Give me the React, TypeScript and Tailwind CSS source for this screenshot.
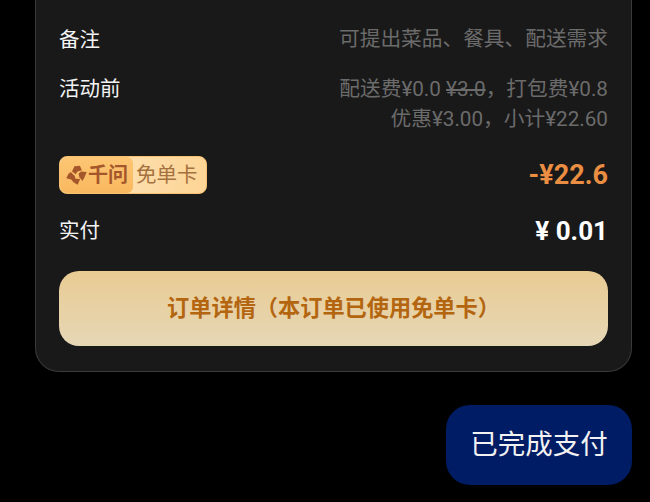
const font = { fontFamily: '"Roboto", "Noto Sans CJK SC", sans-serif' };

const QianwenIcon = () => (
  <svg width="23" height="23" viewBox="0 0 21 21" fill="#a5562a">
    <path d="M8.6 2 L13.6 1.6 L15.4 5.8 L11.4 6.8 L9.8 9.4 L6.4 6.8 Z" />
    <path d="M14.6 6.8 L19.8 7.4 L17.8 12 L16 15.6 L13.2 12.2 L12.4 9 Z" />
    <path d="M5.2 7.4 L8.8 10.8 L9.6 13.4 L13.8 13.8 L11.6 19 L8 17 L5.6 14.2 L1.2 13 L3 9.2 Z" />
  </svg>
);

export default function App() {
  return (
    <div className="w-[650px] h-[502px] overflow-hidden bg-black pl-[35px] pr-[18px]" style={font}>
      <div className="h-[372px] rounded-b-[24px] border border-t-0 border-[#3a3a3a] bg-[#191919] px-[23px] pt-[25px]">
        <div className="flex items-center justify-between h-[30px]">
          <span className="text-[20.5px] text-[#f4f4f4]">备注</span>
          <span className="text-[20.7px] text-[#6b6b6b]">可提出菜品、餐具、配送需求</span>
        </div>

        <div className="mt-[19px] flex items-start justify-between">
          <span className="text-[20.5px] leading-[30px] text-[#f4f4f4]">活动前</span>
          <div className="text-right text-[20.7px] leading-[30px] text-[#6b6b6b]">
            <div>
              配送费¥0.0 <span className="line-through">¥3.0</span>，打包费¥0.8
            </div>
            <div>优惠¥3.00，小计¥22.60</div>
          </div>
        </div>

        <div className="mt-[22px] flex h-[38px] items-center justify-between">
          <div className="flex h-[38px] w-[148px] overflow-hidden rounded-[8px] bg-gradient-to-r from-[#fde6bd] to-[#fdd596] border border-[#f6c272]">
            <div className="flex w-[73px] items-center rounded-r-[6px] bg-gradient-to-b from-[#fdc674] to-[#f9b85e] pl-[5px]">
              <QianwenIcon />
              <span className="text-[20px] font-bold text-[#a5562a]">千问</span>
            </div>
            <span className="pl-[3px] text-[20.5px] leading-[36px] text-[#a5713f]">免单卡</span>
          </div>
          <span className="text-[27px] font-bold text-[#e98e42]">-¥22.6</span>
        </div>

        <div className="mt-[19px] flex items-center justify-between h-[37px]">
          <span className="text-[20.5px] text-[#f4f4f4]">实付</span>
          <span className="text-[26px] font-bold text-white">¥ 0.01</span>
        </div>

        <button className="mt-[21px] flex h-[75px] w-full items-center justify-center rounded-[20px] bg-gradient-to-b from-[#e9cb93] to-[#e6d7b5] text-[22.2px] font-bold text-[#b3650f]">
          订单详情（本订单已使用免单卡）
        </button>
      </div>

      <div className="mt-[33px] flex justify-end">
        <div className="flex h-[80px] w-[186px] items-center justify-center rounded-[24px] bg-[#001c64] text-[27.5px] text-[#f2f2f2]">
          已完成支付
        </div>
      </div>
    </div>
  );
}
